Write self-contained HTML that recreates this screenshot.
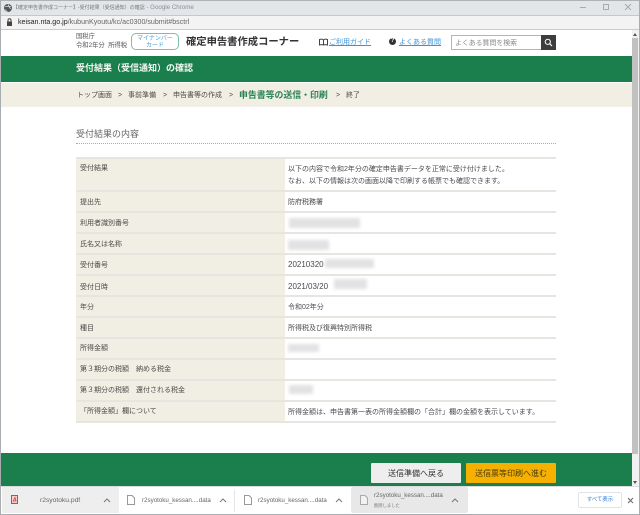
<!DOCTYPE html>
<html lang="ja"><head><meta charset="utf-8"><title>受付結果</title>
<style>
html,body{margin:0;padding:0;background:#fff}
#r{position:relative;width:640px;height:515px;overflow:hidden;background:#fff;font-family:"Liberation Sans","Noto Sans CJK JP",sans-serif;color:#555;filter:blur(.3px)}
#r div{position:absolute;white-space:nowrap}
.l{font-size:7px;color:#4a4a4a;line-height:12px;margin-top:1px}
.d{font-size:8px}
.b{background:#e2e2e2;filter:blur(1.5px)}
.rl{left:76px;width:480px;height:2px;background:#e6e6e1}
</style></head><body><div id="r">
<div style="left:0;top:0;width:640px;height:1px;background:#aeb3b8"></div>
<div style="left:0;top:1px;width:640px;height:14px;background:#e3e6e9"></div>
<div style="left:0;top:15px;width:640px;height:1px;background:#c5c8cb"></div>
<div style="left:0;top:16px;width:640px;height:13px;background:#f3f3f3"></div>
<div style="left:0;top:29px;width:640px;height:1px;background:#c9cbce"></div>
<div style="left:0;top:0;width:1px;height:515px;background:#a8adb2"></div>
<div style="left:639px;top:0;width:1px;height:515px;background:#a8adb2"></div>
<svg style="position:absolute;left:3px;top:3px" width="10" height="10" viewBox="0 0 10 10"><circle cx="5" cy="5" r="4" fill="#555"/><path d="M2 3.5H8M5 1.5L7.5 6M2 6.5L4.5 9" stroke="#ddd" stroke-width=".8" fill="none"/></svg>
<div style="left:13px;top:2px;font-size:5px;line-height:12px;color:#777">【確定申告書作成コーナー】-受付結果（受信通知）の確認<span style="font-size:6.200px;color:#8a8f94"> - Google Chrome</span></div>
<div style="left:580px;top:7px;width:6px;height:1px;background:#aaa"></div>
<div style="left:603px;top:4px;width:4px;height:4px;border:1px solid #aaa"></div>
<svg style="position:absolute;left:624px;top:3px" width="8" height="8" viewBox="0 0 8 8"><path d="M1 1L7 7M7 1L1 7" stroke="#aaa" stroke-width="1"/></svg>
<svg style="position:absolute;left:6px;top:18px" width="7" height="9" viewBox="0 0 7 9"><rect x="1" y="3.500" width="5" height="4.500" fill="#444"/><path d="M2 4V2.300a1.500 1.500 0 013 0V4" stroke="#444" fill="none"/></svg>
<div style="left:18px;top:16px;font-size:7.100px;line-height:12px;color:#666"><span style="color:#222">keisan.nta.go.jp</span>/kubunKyoutu/kc/ac0300/submit#bsctrl</div>

<div style="left:76px;top:32px;font-size:6.300px;line-height:10px;color:#555">国税庁</div>
<div style="left:76px;top:41px;font-size:6.300px;line-height:10px;color:#555">令和2年分&nbsp; 所得税</div>
<div style="left:131px;top:33px;width:46px;height:13px;border:1px solid #7fbfa4;border-radius:5px;text-align:center;font-size:6px;line-height:6.500px;color:#4c9fd6;padding-top:2px">マイナンバー<br>カード</div>
<div style="left:186px;top:36px;font-size:10.300px;line-height:14px;color:#333;font-weight:bold">確定申告書作成コーナー</div>
<svg style="position:absolute;left:319px;top:38px" width="9" height="8" viewBox="0 0 9 8"><path d="M.5 1.500C2 1 3.500 1 4.500 2C5.500 1 7 1 8.500 1.500V7C7 6.500 5.500 6.500 4.500 7C3.500 6.500 2 6.500 .5 7ZM4.500 2V7" stroke="#444" fill="none"/></svg>
<div style="left:329px;top:37px;font-size:7px;line-height:12px;color:#3c94d8;text-decoration:underline">ご利用ガイド</div>
<div style="left:389px;top:38px;width:7px;height:7px;border-radius:50%;background:#333;color:#fff;font-size:6px;line-height:7px;text-align:center;font-weight:bold">?</div>
<div style="left:399px;top:37px;font-size:7px;line-height:12px;color:#3c94d8;text-decoration:underline">よくある質問</div>
<div style="left:451px;top:35px;width:89px;height:13px;border:1px solid #b5b5b5;background:#fff;font-size:6.900px;line-height:15px;color:#888;text-indent:3px">よくある質問を検索</div>
<div style="left:541px;top:35px;width:15px;height:15px;background:#3d3d3d"></div>
<svg style="position:absolute;left:544px;top:38px" width="9" height="9" viewBox="0 0 9 9"><circle cx="3.800" cy="3.800" r="2.600" stroke="#fff" fill="none"/><path d="M5.800 5.800L8 8" stroke="#fff" stroke-width="1.200"/></svg>

<div style="left:1px;top:56px;width:631px;height:26px;background:#1a7f4c"></div>
<div style="left:76px;top:61px;font-size:9px;line-height:14px;color:#f2f7f3;font-weight:bold">受付結果（受信通知）の確認</div>
<div style="left:1px;top:83px;width:631px;height:24px;background:#f1eee3"></div>
<div class="l" style="left:77px;top:89px">トップ画面</div>
<div class="l" style="left:118px;top:89px">&gt;</div>
<div class="l" style="left:128px;top:89px">事前準備</div>
<div class="l" style="left:163px;top:89px">&gt;</div>
<div class="l" style="left:173px;top:89px">申告書等の作成</div>
<div class="l" style="left:229px;top:89px">&gt;</div>
<div style="left:239px;top:88px;font-size:8.900px;line-height:14px;color:#2a8455;font-weight:bold">申告書等の送信・印刷</div>
<div class="l" style="left:336px;top:89px">&gt;</div>
<div class="l" style="left:346px;top:89px">終了</div>

<div style="left:76px;top:128px;font-size:9px;line-height:13px;color:#666">受付結果の内容</div>
<div style="left:76px;top:143px;width:480px;height:0;border-top:1px dotted #ee9f3e"></div>

<div style="left:76px;top:158px;width:208.500px;height:265px;background:#f1eee3"></div>
<div class="rl" style="top:157px"></div><div class="rl" style="top:190px"></div><div class="rl" style="top:211px"></div><div class="rl" style="top:232px"></div><div class="rl" style="top:253px"></div><div class="rl" style="top:274px"></div><div class="rl" style="top:295px"></div><div class="rl" style="top:316px"></div><div class="rl" style="top:337px"></div><div class="rl" style="top:358px"></div><div class="rl" style="top:379px"></div><div class="rl" style="top:400px"></div><div class="rl" style="top:421px"></div>

<div class="l" style="left:80px;top:162px">受付結果</div>
<div class="l" style="left:80px;top:196px">提出先</div>
<div class="l" style="left:80px;top:217px">利用者識別番号</div>
<div class="l" style="left:80px;top:238px">氏名又は名称</div>
<div class="l" style="left:80px;top:259px">受付番号</div>
<div class="l" style="left:80px;top:281px">受付日時</div>
<div class="l" style="left:80px;top:301px">年分</div>
<div class="l" style="left:80px;top:322px">種目</div>
<div class="l" style="left:80px;top:342px">所得金額</div>
<div class="l" style="left:80px;top:363px">第３期分の税額　納める税金</div>
<div class="l" style="left:80px;top:384px">第３期分の税額　還付される税金</div>
<div class="l" style="left:80px;top:405px">「所得金額」欄について</div>

<div class="l" style="left:288px;top:163px">以下の内容で令和2年分の確定申告書データを正常に受け付けました。</div>
<div class="l" style="left:288px;top:175px">なお、以下の情報は次の画面以降で印刷する帳票でも確認できます。</div>
<div class="l" style="left:288px;top:196px">防府税務署</div>
<div class="b" style="left:289px;top:218px;width:71px;height:10px"></div>
<div class="b" style="left:288px;top:240px;width:41px;height:10px"></div>
<div class="l d" style="left:288px;top:258px">20210320</div>
<div class="b" style="left:325px;top:259px;width:49px;height:9px"></div>
<div class="l d" style="left:288px;top:280px">2021/03/20</div>
<div class="b" style="left:334px;top:279px;width:33px;height:10px"></div>
<div class="l" style="left:288px;top:301px">令和02年分</div>
<div class="l" style="left:288px;top:322px">所得税及び復興特別所得税</div>
<div class="b" style="left:288px;top:344px;width:31px;height:8px"></div>
<div class="b" style="left:289px;top:385px;width:24px;height:9px"></div>
<div class="l" style="left:288px;top:406px">所得金額は、申告書第一表の所得金額欄の「合計」欄の金額を表示しています。</div>

<div style="left:1px;top:453px;width:631px;height:33px;background:#1a7f4c"></div>
<div style="left:371px;top:463px;width:90px;height:20px;background:#eee;border-radius:1px;text-align:center;font-size:8px;line-height:22px;color:#333">送信準備へ戻る</div>
<div style="left:466px;top:463px;width:90px;height:20px;background:#f6b000;border-radius:1px;text-align:center;font-size:8px;line-height:22px;color:#4a3c08">送信票等印刷へ進む</div>

<div style="left:632px;top:30px;width:7px;height:456px;background:#f1f1f1"></div>
<div style="left:632px;top:38px;width:6px;height:416px;background:#c1c1c1"></div>
<div style="left:633px;top:33px;width:0;height:0;border:2px solid transparent;border-bottom:3px solid #555;border-top:0"></div>
<div style="left:633px;top:481px;width:0;height:0;border:2px solid transparent;border-top:3px solid #555;border-bottom:0"></div>

<div style="left:1px;top:486px;width:638px;height:1px;background:#dcdcdc"></div>
<div style="left:1px;top:487px;width:638px;height:26px;background:#fff"></div>
<div style="left:0;top:514px;width:640px;height:1px;background:#a8adb2"></div>
<div style="left:2px;top:487px;width:117px;height:26px;background:#eee"></div>
<svg style="position:absolute;left:11px;top:495px" width="7" height="9" viewBox="0 0 7 9"><rect x=".5" y=".5" width="6" height="8" fill="#f6d0d0" stroke="#d9413e"/><path d="M2 6.500L4 2.500L5 6H2" stroke="#d9413e" fill="none" stroke-width=".8"/></svg>
<div style="left:40px;top:495px;font-size:6.700px;line-height:12px;color:#666">r2syotoku.pdf</div>
<svg style="position:absolute;left:103px;top:498px" width="8" height="5" viewBox="0 0 8 5"><path d="M1 4L4 1L7 4" stroke="#777" fill="none"/></svg>

<div style="left:234px;top:490px;width:1px;height:22px;background:#e5e5e5"></div>
<svg style="position:absolute;left:127px;top:495px" width="8" height="10" viewBox="0 0 8 10"><path d="M.5 .5H5L7.500 3V9.500H.5Z" stroke="#999" fill="#fff"/></svg>
<div style="left:142px;top:495px;font-size:6.200px;line-height:12px;color:#666">r2syotoku_kessan....data</div>
<svg style="position:absolute;left:219px;top:498px" width="8" height="5" viewBox="0 0 8 5"><path d="M1 4L4 1L7 4" stroke="#777" fill="none"/></svg>
<svg style="position:absolute;left:244px;top:495px" width="8" height="10" viewBox="0 0 8 10"><path d="M.5 .5H5L7.500 3V9.500H.5Z" stroke="#999" fill="#fff"/></svg>
<div style="left:258px;top:495px;font-size:6.200px;line-height:12px;color:#666">r2syotoku_kessan....data</div>
<svg style="position:absolute;left:335px;top:498px" width="8" height="5" viewBox="0 0 8 5"><path d="M1 4L4 1L7 4" stroke="#777" fill="none"/></svg>

<div style="left:351px;top:487px;width:117px;height:26px;background:#e8e8e8;border-radius:2px"></div>
<svg style="position:absolute;left:360px;top:495px" width="8" height="10" viewBox="0 0 8 10"><path d="M.5 .5H5L7.500 3V9.500H.5Z" stroke="#aaa" fill="#f2f2f2"/></svg>
<div style="left:374px;top:490px;font-size:6.200px;line-height:11px;color:#666">r2syotoku_kessan....data</div>
<div style="left:374px;top:501px;font-size:4.300px;line-height:9px;color:#777">削除しました</div>
<svg style="position:absolute;left:451px;top:498px" width="8" height="5" viewBox="0 0 8 5"><path d="M1 4L4 1L7 4" stroke="#777" fill="none"/></svg>
<div style="left:578px;top:492px;width:42px;height:14px;border:1px solid #e3e3e3;border-radius:2px;text-align:center;font-size:5.400px;line-height:15px;color:#2f7de1">すべて表示</div>
<svg style="position:absolute;left:627px;top:497px" width="7" height="7" viewBox="0 0 7 7"><path d="M1 1L6 6M6 1L1 6" stroke="#666" stroke-width="1"/></svg>
</div></body></html>
